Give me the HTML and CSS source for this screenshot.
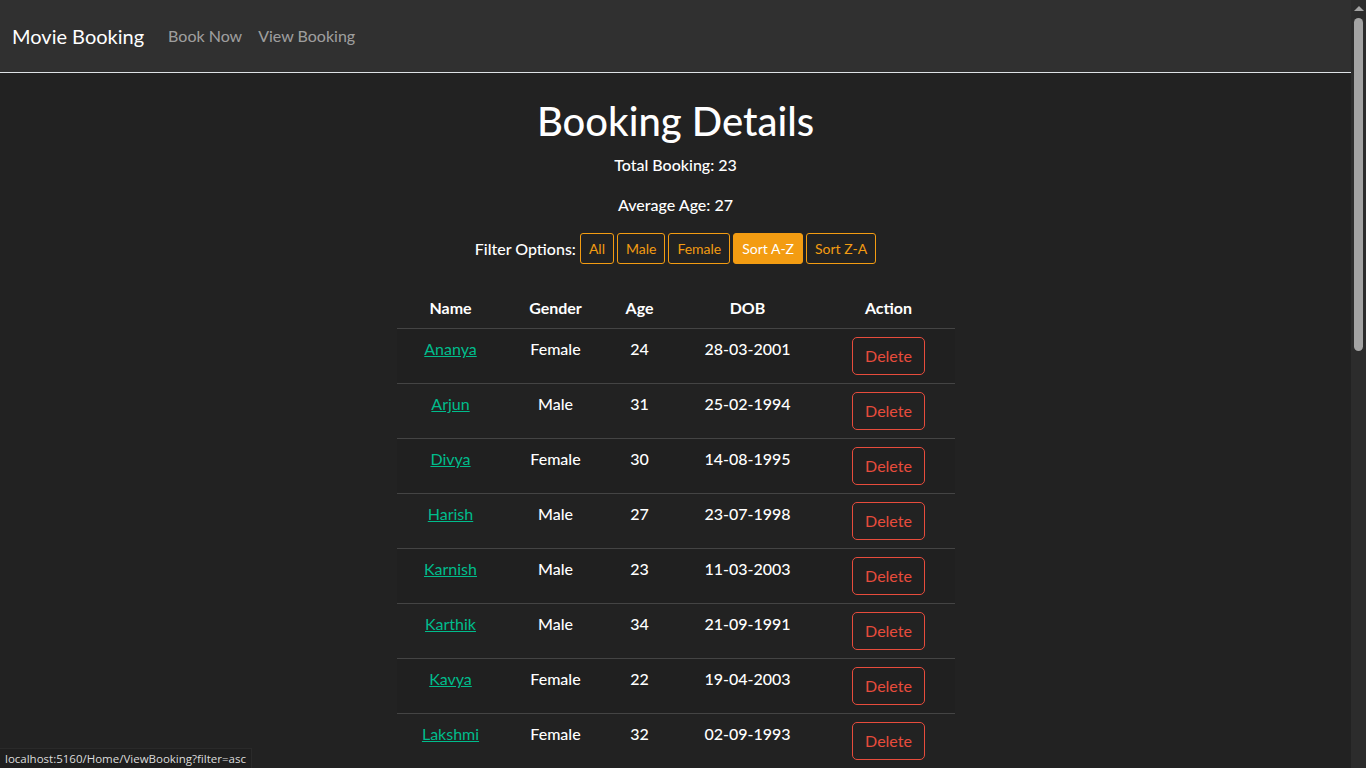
FILE: index.html
```html
<!DOCTYPE html>
<html lang="en">
<head>
<meta charset="utf-8">
<title>Booking Details - Movie Booking</title>
<link rel="stylesheet" href="styles.css">
</head>
<body>
<div class="page">
<header class="navbar">
  <a class="brand" href="#">Movie Booking</a>
  <nav class="nav-links">
    <a href="#">Book Now</a>
    <a href="#">View Booking</a>
  </nav>
</header>
<main class="content">
  <h1>Booking Details</h1>
  <p class="stat">Total Booking: 23</p>
  <p class="stat">Average Age: 27</p>
  <div class="filters">
    <span class="filter-label">Filter Options:</span>
    <a class="fbtn" href="#">All</a>
    <a class="fbtn" href="#">Male</a>
    <a class="fbtn" href="#">Female</a>
    <a class="fbtn active" href="#">Sort A-Z</a>
    <a class="fbtn" href="#">Sort Z-A</a>
  </div>
  <table class="bookings">
    <thead>
      <tr><th class="c-name">Name</th><th class="c-gender">Gender</th><th class="c-age">Age</th><th class="c-dob">DOB</th><th class="c-action">Action</th></tr>
    </thead>
    <tbody>
      <tr><td><a href="#">Ananya</a></td><td>Female</td><td>24</td><td>28-03-2001</td><td><button class="del">Delete</button></td></tr>
      <tr><td><a href="#">Arjun</a></td><td>Male</td><td>31</td><td>25-02-1994</td><td><button class="del">Delete</button></td></tr>
      <tr><td><a href="#">Divya</a></td><td>Female</td><td>30</td><td>14-08-1995</td><td><button class="del">Delete</button></td></tr>
      <tr><td><a href="#">Harish</a></td><td>Male</td><td>27</td><td>23-07-1998</td><td><button class="del">Delete</button></td></tr>
      <tr><td><a href="#">Karnish</a></td><td>Male</td><td>23</td><td>11-03-2003</td><td><button class="del">Delete</button></td></tr>
      <tr><td><a href="#">Karthik</a></td><td>Male</td><td>34</td><td>21-09-1991</td><td><button class="del">Delete</button></td></tr>
      <tr><td><a href="#">Kavya</a></td><td>Female</td><td>22</td><td>19-04-2003</td><td><button class="del">Delete</button></td></tr>
      <tr><td><a href="#">Lakshmi</a></td><td>Female</td><td>32</td><td>02-09-1993</td><td><button class="del">Delete</button></td></tr>
    </tbody>
  </table>
</main>
</div>
<div class="scrollbar" aria-hidden="true">
  <span class="sb-arrow"></span>
  <span class="sb-thumb"></span>
</div>
<div class="status-url">localhost:5160/Home/ViewBooking?filter=asc</div>
</body>
</html>
```
FILE: styles.css
```css
html {
  color-scheme: dark;
}
body {
  margin: 0;
  background: #222222;
  color: #ffffff;
  font-family: Lato, "Open Sans", sans-serif;
  font-size: 16px;
  line-height: 1.5;
  overflow: hidden;
}
.page {
  margin-right: 15px;
  height: 768px;
  overflow: hidden;
}
a {
  color: #00bc8c;
}
.navbar {
  display: flex;
  align-items: center;
  height: 72px;
  padding: 0 12px;
  background: #303030;
  border-bottom: 1px solid #dee2e6;
}
.brand {
  color: #ffffff;
  text-decoration: none;
  font-size: 20px;
  font-weight: 400;
  margin-right: 16px;
}
.nav-links {
  display: flex;
}
.nav-links a {
  color: rgba(255, 255, 255, 0.55);
  text-decoration: none;
  font-weight: 400;
  padding: 0 8px;
}
.content {
  display: flex;
  flex-direction: column;
  align-items: center;
  padding-top: 24px;
}
h1 {
  margin: 0 0 8px;
  font-size: 40px;
  font-weight: 500;
  line-height: 1.2;
}
.stat {
  margin: 0 0 16px;
  font-weight: 500;
}
.filters {
  display: flex;
  align-items: center;
  gap: 3px;
  margin-bottom: 24px;
}
.filter-label {
  font-weight: 500;
  margin-right: 1px;
}
.fbtn {
  display: inline-block;
  padding: 4px 8px;
  font-size: 14px;
  line-height: 21px;
  color: #f39c12;
  border: 1px solid #f39c12;
  border-radius: 3px;
  text-decoration: none;
}
.fbtn.active {
  background: #f39c12;
  color: #ffffff;
}
.bookings {
  border-collapse: collapse;
  width: 558px;
}
.bookings th,
.bookings td {
  padding: 8px;
  text-align: center;
  vertical-align: top;
  border-bottom: 1px solid #444444;
  font-weight: 500;
}
.bookings th {
  font-weight: 700;
}
.bookings tbody tr:nth-child(odd) {
  background: rgba(0, 0, 0, 0.03);
}
.c-name { width: 92px; }
.c-gender { width: 86px; }
.c-age { width: 50px; }
.c-dob { width: 134px; }
.c-action { width: 116px; }
.bookings td a {
  font-weight: 400;
}
.del {
  font-family: inherit;
  font-size: 16px;
  line-height: 24px;
  padding: 6px 12px;
  background: transparent;
  color: #e74c3c;
  border: 1px solid #e74c3c;
  border-radius: 5px;
}
.scrollbar {
  position: fixed;
  top: 0;
  right: 0;
  width: 15px;
  height: 100%;
  background: #2c2c2c;
}
.sb-arrow {
  position: absolute;
  top: 6px;
  left: 3px;
  width: 0;
  height: 0;
  border-left: 5px solid transparent;
  border-right: 5px solid transparent;
  border-bottom: 5px solid #a3a3a3;
}
.sb-thumb {
  position: absolute;
  top: 18px;
  left: 3px;
  width: 9px;
  height: 333px;
  border-radius: 5px;
  background: #a3a3a3;
}
.status-url {
  position: fixed;
  left: 0;
  bottom: 0;
  padding: 2px 5px 2px;
  background: #1f1f1f;
  border-top: 1px solid #2a2a2a;
  border-right: 1px solid #2a2a2a;
  color: #dcdcdc;
  font-family: "Open Sans", "DejaVu Sans", sans-serif;
  font-size: 11.5px;
  line-height: 15px;
}
```
